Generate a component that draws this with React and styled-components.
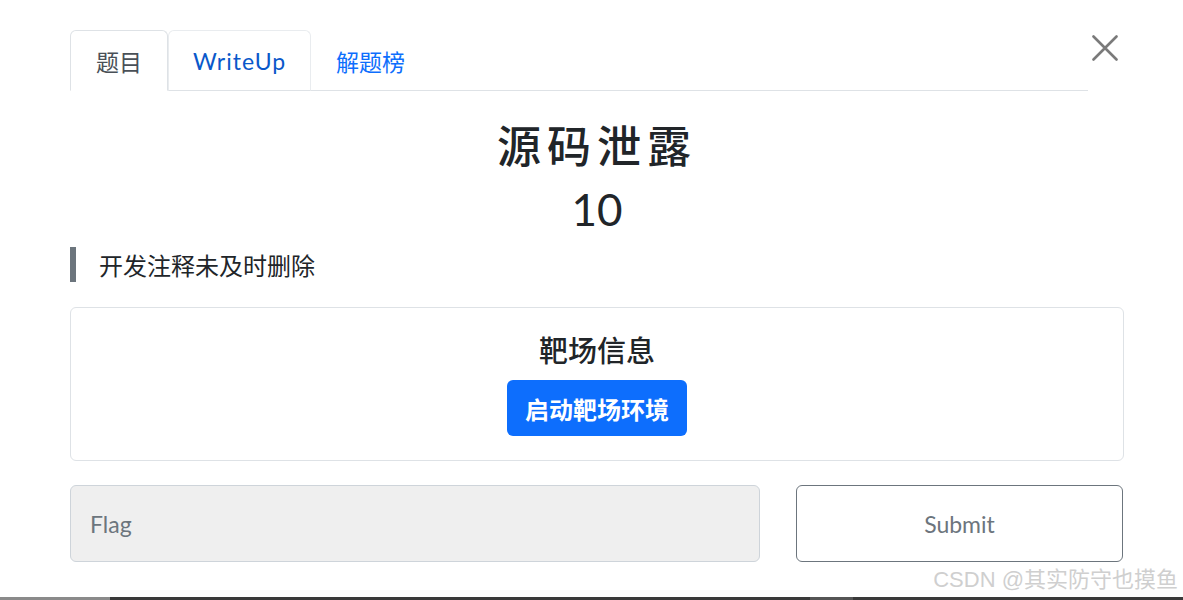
import React from "react";
import styled, { createGlobalStyle } from "styled-components";

const GlobalStyle = createGlobalStyle`
  html, body {
    margin: 0;
    padding: 0;
    background: #fff;
    font-family: Lato, "Noto Sans CJK SC", sans-serif;
    color: #212529;
  }
`;

const TABS = [
  { label: "题目", active: true },
  { label: "WriteUp", hover: true, latin: true },
  { label: "解题榜" },
];

const App = () => (
  <Page>
    <GlobalStyle />
    <Dialog>
      <Header>
        <Tabs>
          {TABS.map(t => (
            <Tab key={t.label} active={t.active} hover={t.hover} latin={t.latin}>
              {t.label}
            </Tab>
          ))}
        </Tabs>
        <CloseButton aria-label="close">
          <svg width="26" height="26" viewBox="0 0 26 26">
            <path
              d="M1.5 1.5L24.5 24.5M24.5 1.5L1.5 24.5"
              stroke="#7a7a7a"
              strokeWidth="2.6"
              strokeLinecap="round"
            />
          </svg>
        </CloseButton>
      </Header>

      <Title>源码泄露</Title>
      <Score>10</Score>

      <Quote>开发注释未及时删除</Quote>

      <Card>
        <CardTitle>靶场信息</CardTitle>
        <PrimaryButton>启动靶场环境</PrimaryButton>
      </Card>

      <FlagRow>
        <FlagInput placeholder="Flag" />
        <SubmitButton>Submit</SubmitButton>
      </FlagRow>
    </Dialog>
    <Watermark>CSDN @其实防守也摸鱼</Watermark>
    <BottomBar>
      <BarThumb width={110} />
      <BarGap width={700} />
      <BarThumb width={43} light />
    </BottomBar>
  </Page>
);

const Page = styled.div`
  height: 600px;
  display: flex;
  flex-direction: column;
  overflow: hidden;
`;

const Dialog = styled.div`
  flex: 1;
  padding: 30px 59px 0 70px;
  display: flex;
  flex-direction: column;
`;

const Header = styled.div`
  display: flex;
  align-items: flex-start;
`;

const Tabs = styled.div`
  display: flex;
  width: 1018px;
  border-bottom: 1px solid #dee2e6;
`;

const Tab = styled.div`
  height: 59px;
  padding: 0 ${p => (p.active ? 25 : 24)}px;
  display: flex;
  align-items: center;
  margin-bottom: -1px;
  font-size: 23px;
  letter-spacing: ${p => (p.latin ? "1px" : "0")};
  border: 1px solid transparent;
  border-radius: 6px 6px 0 0;
  box-sizing: content-box;
  color: ${p => (p.active ? "#495057" : p.hover ? "#0a58ca" : "#0d6efd")};
  ${p =>
    p.active
      ? "border-color: #dee2e6 #dee2e6 #fff; background: #fff;"
      : ""}
  ${p => (p.hover ? "border-color: #e9ecef #e9ecef #dee2e6;" : "")}
`;

const CloseButton = styled.div`
  margin-left: auto;
  margin-right: 6px;
  margin-top: 5px;
  width: 26px;
  height: 26px;
  display: flex;
`;

const Title = styled.h3`
  margin: 26px 0 0;
  text-align: center;
  font-size: 44px;
  font-weight: 500;
  letter-spacing: 6px;
  line-height: 58px;
  color: #212529;
`;

const Score = styled.div`
  text-align: center;
  font-size: 44px;
  line-height: 58px;
  margin-top: 5px;
  color: #212529;
`;

const Quote = styled.div`
  margin-top: 9px;
  border-left: 6px solid #6c757d;
  padding-left: 23px;
  height: 35px;
  display: flex;
  align-items: center;
  font-size: 24px;
  color: #212529;
`;

const Card = styled.div`
  margin-top: 25px;
  width: 1052px;
  height: 152px;
  border: 1px solid #dee2e6;
  border-radius: 6px;
  display: flex;
  flex-direction: column;
  align-items: center;
`;

const CardTitle = styled.div`
  margin-top: 23px;
  font-size: 29px;
  font-weight: 500;
  line-height: 40px;
`;

const PrimaryButton = styled.button`
  margin-top: 9px;
  height: 56px;
  padding: 0 18px;
  border: none;
  border-radius: 6px;
  background: #0d6efd;
  color: #fff;
  font-family: Lato, "Noto Sans CJK SC", sans-serif;
  font-size: 24px;
  font-weight: 700;
`;

const FlagRow = styled.div`
  margin-top: 24px;
  display: flex;
  gap: 36px;
  width: 1053px;
`;

const FlagInput = styled.input`
  box-sizing: border-box;
  width: 690px;
  height: 77px;
  padding: 0 19px;
  background: #efefef;
  border: 1px solid #ced4da;
  border-radius: 6px;
  font-family: Lato, sans-serif;
  font-size: 23px;
  color: #495057;
  &::placeholder {
    color: #6c757d;
  }
`;

const SubmitButton = styled.button`
  box-sizing: border-box;
  width: 327px;
  height: 77px;
  background: #fff;
  border: 1px solid #6c757d;
  border-radius: 6px;
  font-family: Lato, sans-serif;
  font-size: 23px;
  color: #6c757d;
`;

const Watermark = styled.div`
  align-self: flex-end;
  margin: 0 5px 4px 0;
  font-family: "Liberation Sans", "Noto Sans CJK SC", sans-serif;
  font-size: 22px;
  line-height: 26px;
  color: #cfcfcf;
`;

const BottomBar = styled.div`
  height: 3px;
  display: flex;
  background: #3a3a3a;
`;

const BarThumb = styled.div`
  width: ${p => p.width}px;
  background: ${p => (p.light ? "#555" : "#8a8a8a")};
`;

const BarGap = styled.div`
  width: ${p => p.width}px;
`;

export default App;
